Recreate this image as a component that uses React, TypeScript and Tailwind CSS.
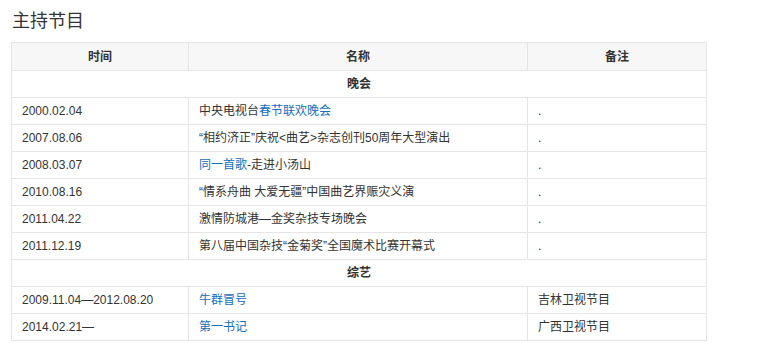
const font = "font-['Liberation_Sans','Noto_Sans_CJK_SC',sans-serif]";

type Row = { date: string; name: React.ReactNode; note: string };

const link = (t: string) => <a className="text-[#136ec2]">{t}</a>;

const gala: Row[] = [
  { date: "2000.02.04", name: <>中央电视台{link("春节联欢晚会")}</>, note: "." },
  { date: "2007.08.06", name: "“相约济正”庆祝<曲艺>杂志创刊50周年大型演出", note: "." },
  { date: "2008.03.07", name: <>{link("同一首歌")}-走进小汤山</>, note: "." },
  { date: "2010.08.16", name: "“情系舟曲 大爱无疆”中国曲艺界赈灾义演", note: "." },
  { date: "2011.04.22", name: "激情防城港—金奖杂技专场晚会", note: "." },
  { date: "2011.12.19", name: "第八届中国杂技“金菊奖”全国魔术比赛开幕式", note: "." },
];

const variety: Row[] = [
  { date: "2009.11.04—2012.08.20", name: link("牛群冒号"), note: "吉林卫视节目" },
  { date: "2014.02.21—", name: link("第一书记"), note: "广西卫视节目" },
];

function Section({ title }: { title: string }) {
  return (
    <tr>
      <td colSpan={3} className="h-[27px] border border-[#e5e5e5] text-center font-bold">
        {title}
      </td>
    </tr>
  );
}

function Rows({ rows }: { rows: Row[] }) {
  return (
    <>
      {rows.map((r) => (
        <tr key={r.date}>
          <td className="h-[27px] border border-[#e5e5e5] pl-[10px]">{r.date}</td>
          <td className="h-[27px] border border-[#e5e5e5] pl-[10px]">{r.name}</td>
          <td className="h-[27px] border border-[#e5e5e5] pl-[10px]">{r.note}</td>
        </tr>
      ))}
    </>
  );
}

export default function App() {
  return (
    <div className={`${font} bg-white text-[#333] px-[11px] pt-[9px] w-[774px] h-[354px]`}>
      <h2 className="text-[18px] leading-[24px] ml-px">主持节目</h2>
      <table className="mt-[9px] w-[695px] table-fixed border-collapse text-[12px] leading-[16px]">
        <colgroup>
          <col className="w-[177px]" />
          <col className="w-[339px]" />
          <col className="w-[179px]" />
        </colgroup>
        <thead>
          <tr className="bg-[#f7f7f7]">
            <th className="h-[28px] border border-[#e5e5e5] font-bold">时间</th>
            <th className="h-[28px] border border-[#e5e5e5] font-bold">名称</th>
            <th className="h-[28px] border border-[#e5e5e5] font-bold">备注</th>
          </tr>
        </thead>
        <tbody>
          <Section title="晚会" />
          <Rows rows={gala} />
          <Section title="综艺" />
          <Rows rows={variety} />
        </tbody>
      </table>
    </div>
  );
}
